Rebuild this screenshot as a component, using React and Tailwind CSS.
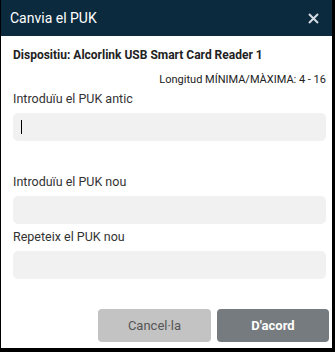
export default function App() {
  return (
    <div className="h-[352px] w-[335px] bg-black font-['Roboto',sans-serif]">
      <div className="ml-[1px] flex h-[348px] w-[331px] flex-col bg-white">
        {/* Header */}
        <div className="flex h-[36px] items-center justify-between bg-[#0b2a3e] pl-[9px] pr-[13px]">
          <span className="text-[14px] text-white">Canvia el PUK</span>
          <svg width="11" height="11" viewBox="0 0 11 11" className="text-[#d5dbe3]">
            <path d="M1 1 L10 10 M10 1 L1 10" stroke="currentColor" strokeWidth="2" />
          </svg>
        </div>

        {/* Body */}
        <div className="flex flex-1 flex-col pl-[12px] pr-[6px]">
          <p className="mt-[11px] text-[12px] font-bold leading-[16px] text-[#222]">
            Dispositiu: Alcorlink USB Smart Card Reader 1
          </p>
          <p className="mt-[10px] text-right text-[11px] leading-[13px] text-[#222]">
            Longitud MÍNIMA/MÀXIMA: 4 - 16
          </p>
          <label className="mt-[5px] text-[12.5px] leading-[16px] text-[#333]">Introduïu el PUK antic</label>
          <div className="mt-[6px] flex h-[28px] items-center rounded-[5px] bg-[#f1f1f1] pl-[8px]">
            <span className="h-[14px] w-[1px] bg-black" />
          </div>

          <label className="mt-[33px] text-[12.5px] leading-[16px] text-[#333]">Introduïu el PUK nou</label>
          <div className="mt-[6px] h-[28px] rounded-[5px] bg-[#f1f1f1]" />

          <label className="mt-[5px] text-[12.5px] leading-[16px] text-[#333]">Repeteix el PUK nou</label>
          <div className="mt-[6px] h-[28px] rounded-[5px] bg-[#f1f1f1]" />

          <div className="mt-auto mb-[6px] -mr-[3px] flex justify-end gap-[6px]">
            <button className="h-[33px] w-[113px] rounded-[4px] bg-[#c3c3c3] text-[13px] text-[#555]">
              Cancel·la
            </button>
            <button className="h-[33px] w-[112px] rounded-[4px] bg-[#757b7e] text-[13px] font-bold text-white">
              D'acord
            </button>
          </div>
        </div>
      </div>
    </div>
  );
}
